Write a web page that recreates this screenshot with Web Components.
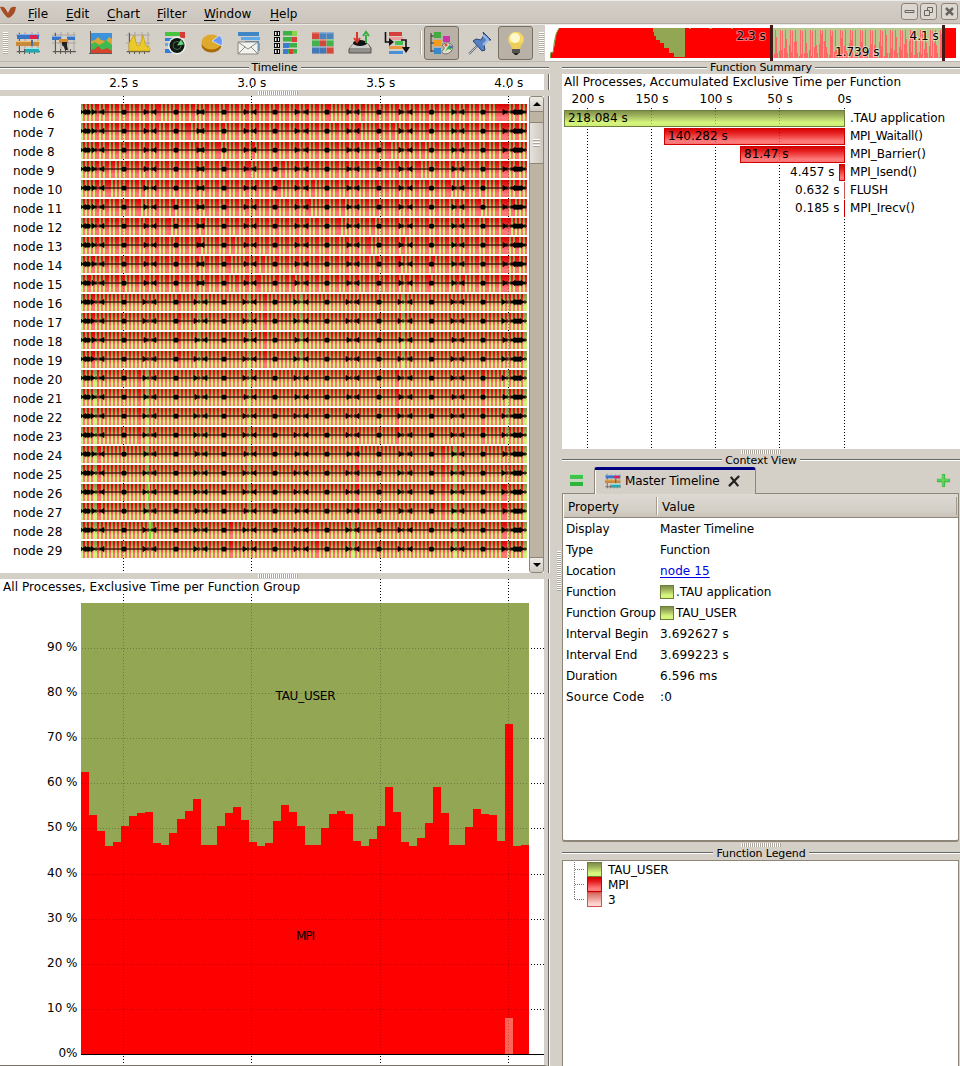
<!DOCTYPE html>
<html lang="en"><head><meta charset="utf-8"><title>Trace viewer</title>
<style>
html,body{margin:0;height:1066px;overflow:hidden;background:#d4cfc7;color:#000;font:12px "DejaVu Sans",sans-serif}
</style></head><body>
<trace-app></trace-app>
<script>
const make=(name,html,init)=>customElements.define(name,class extends HTMLElement{
  connectedCallback(){
    if(this.shadowRoot)return;
    const root=this.attachShadow({mode:'open'});
    root.innerHTML=typeof html==='function'?html(this):html;
    if(init)init(this,root);
  }
});
const rect=(x,y,w,h,f,extra='')=>`<rect x="${x}" y="${y}" width="${w}" height="${h}" fill="${f}" ${extra}/>`;
const text=(x,y,t,extra='')=>`<text x="${x}" y="${y}" ${extra}>${t}</text>`;
const grads=`<defs>
<linearGradient id="g" x1="0" y1="0" x2="0" y2="1"><stop offset="0" stop-color="#7d8f48"/><stop offset=".25" stop-color="#98aa58"/><stop offset=".75" stop-color="#d5f57c"/><stop offset="1" stop-color="#cdec78"/></linearGradient>
<linearGradient id="r" x1="0" y1="0" x2="0" y2="1"><stop offset="0" stop-color="#d40000"/><stop offset=".3" stop-color="#e62222"/><stop offset=".8" stop-color="#ff7c7c"/><stop offset="1" stop-color="#f87070"/></linearGradient>
<linearGradient id="p" x1="0" y1="0" x2="0" y2="1"><stop offset="0" stop-color="#d86a62"/><stop offset=".8" stop-color="#ffd4d0"/><stop offset="1" stop-color="#f4c4c0"/></linearGradient></defs>`;

const axes=`<path d="M3 1V22M9 1V22M16 1V22M22 1V22M0 4H24M0 12H24M0 21H24" stroke="#aaa59e" stroke-width="1"/><path d="M3.500 2V23M1 20.500H24M8.500 18V23M13.500 18V23M18.500 18V23" stroke="#5c5a56"/>`;
const icons={
 timeline:axes+rect(1,3,22,5,'#3b74c4')+rect(14,3,8,5,'#d9234e')+rect(1,3,22,1,'#7fb1ef')+rect(0,10,23,5,'#c98a3a')+rect(0,10,23,1,'#f3c274')+rect(15,9,2,6,'#4770a0')+rect(9,17,14,4.500,'#25a9b1')+rect(9,17,14,1,'#91ecef'),
 process:axes+rect(0,5,9,4,'#3b74c4')+rect(15,5,8,4,'#3b74c4')+rect(0,5,9,1,'#7fb1ef')+rect(15,5,8,1,'#7fb1ef')+rect(7,8,9,4,'#d98e2e')+`<path d="M10 11h5v4l1 4h-3l-1-3-2-2z" fill="#222"/>`,
 area:rect(2,2,21,20,'#3c93dc')+`<path d="M2 10l4-1 3-3 3 3 5 1 3-4 3 2V20H2z" fill="#dda737"/><path d="M2 13l4-2 4 3 4-2 3-3 6 5v8H2z" fill="#3ebb50"/><path d="M2 19l4-1 3-3 4 4 5-2 5 3v2H2z" fill="#d7432b"/><path d="M1.500 0V23M0 22.500H23" stroke="#5c5a56"/>`,
 line:axes+`<path d="M3 20V12l2-3 3-5 3 11 3-1 3-10 2 8 2 4 1-1 2 3v2z" fill="#ecc92a" stroke="#c69b08" stroke-width=".7"/>`,
 radar:rect(2,1,20,4,'#46c33f')+rect(17,1,5,6,'#db3838')+rect(2,7,12,3,'#347cd5')+rect(2,12,8,3,'#64a9e8')+rect(2,18,8,4,'#347cd5')+`<circle cx="14" cy="14.500" r="9" fill="#edf1ef"/><circle cx="14" cy="14.500" r="7.500" fill="#101812"/><circle cx="14" cy="14.500" r="4" fill="none" stroke="#416d4e"/><path d="M14 14.500l4-6 3 5z" fill="#69d17a"/>`,
 pie:`<ellipse cx="11.500" cy="14" rx="10" ry="7.500" fill="#a86b08"/><ellipse cx="11.500" cy="11" rx="10" ry="7.500" fill="#dfa92c"/><path d="M12 10L20 4q4 5 2 11z" fill="#6c99f3" stroke="#e9efff" stroke-width=".8"/>`,
 mail:rect(1,1,21,4,'#3f86c9')+rect(4,6,19,3,'#5ca8e8')+rect(8,10,14,3,'#3f86c9')+rect(20,12,3,8,'#5ca8e8')+`<path d="M1 11H21V23H1z" fill="#f3f3ee" stroke="#8a8985"/><path d="M1 11l10 7 10-7M1 23l7-7M21 23l-7-7" fill="none" stroke="#8a8985"/>`,
 counter:[1,7,13,19].map(y=>rect(0,y-1,6,5,'#080808')+rect(1,y,1.500,3,'#eee')+rect(4,y,1,3,'#eee')+rect(9,y-1,14,4.500,'#3bb244')).join('')+rect(18,0,5,5,'#8ad44b')+rect(18,6,5,5,'#d84138')+rect(9,12,6,5,'#3c7dd0')+rect(15,18,4,5,'#d84138')+rect(9,18,5,5,'#3c7dd0'),
 matrix:[['#d5463b','#4a83bd','#4a83bd'],['#43b24d','#d5463b','#43b24d'],['#4278b6','#4278b6','#d5463b']].map((a,j)=>a.map((c,i)=>rect(1+i*7.300,1+j*7.300,7,7,c)+rect(1+i*7.300,1+j*7.300,7,1.500,'#fff','opacity=".35"')).join('')).join(''),
 disk:`<path d="M5 13H20L23 17V22H1V18z" fill="#92918e" stroke="#55534f"/><path d="M5 13H20L22 17H2z" fill="#ccc"/><ellipse cx="12" cy="12" rx="7" ry="3" fill="#111"/><path d="M9 1V9M6 7l3 4 3-4" stroke="#d9372b" stroke-width="2" fill="none"/><path d="M18 12V4M15 5l3-4 3 4" stroke="#36ae42" stroke-width="2" fill="none"/>`,
 flow:rect(5,1,13,4,'#d63d3d')+rect(5,6,14,3,'#eb9c9c')+rect(11,10,8,4,'#42c24d')+rect(5,15,14,3,'#e79a42')+rect(5,20,14,3,'#4691d8')+`<path d="M1.500 1V11H6M17 9H22V17" fill="none" stroke="#111" stroke-width="1.600"/><path d="M5 7l5 4-5 4zM18 16h8l-4 6z" fill="#111"/>`,
 tree:`<path d="M1 2V21M1 5H5M1 12H5M1 20H5" stroke="#333"/>`+rect(4,1,7,6,'#42ad3e')+rect(4,9,7,6,'#f49c1c')+rect(4,17,7,6,'#368ac9')+rect(13,5,7,6,'#cb35a8')+`<path d="M12 14q6-5 11 1-1 8-8 8-5-1-2-4 3-2-1-5z" fill="#e4dfcf" stroke="#77736b"/><path d="M15 21l2-4 3-4 1 6-3-1z" fill="#2bb835"/><circle cx="16" cy="14" r="1.500" fill="#d74e3a"/><circle cx="21" cy="16" r="1.500" fill="#4567cd"/>`,
 pin:`<path d="M1 23L10 14" stroke="#59677c" stroke-width="2"/><path d="M1 23L10 14" stroke="#ddd" stroke-width=".8"/><path d="M15 1l8 8-3 0-4 5 1 5-3 1L5 10l3-2 5 1 3-5z" fill="#5681c5" stroke="#27466f"/><path d="M15 4l5 5-5 5" fill="none" stroke="#9bbcec" stroke-width="2"/>`,
 bulb:`<circle cx="12" cy="8.500" r="7.800" fill="#f4d968"/><path d="M6 12H18L16 18H8z" fill="#edce5b"/><ellipse cx="11" cy="7" rx="5" ry="5" fill="#fff8cb"/>${rect(8,18,8,4,'#54534d')}<path d="M9 22H15L13 24H11z" fill="#222"/>`,
 list:rect(1,2,13,5,'#42c34b')+rect(1,9,13,5,'#30b43b')+rect(1,2,13,1,'#a3e8a8')+rect(1,9,13,1,'#a3e8a8'),
 plus:`<path d="M8 1V15M1 8H15" stroke="#41bd41" stroke-width="3.500"/><path d="M7.500 2V14M2 7.500H14" stroke="#7de078" stroke-width="1"/>`,
 close:`<path d="M3 2l8 10M1 12L12 1" stroke="#222" stroke-width="2.400"/>`,
 logo:`<path d="M0 3q5-1 8 5 2-6 8-5-1 9-8 11-5-4-8-11z" fill="#a84c25"/><path d="M5 4l3 5 3-6z" fill="#d0cbc4"/>`
};
make('app-icon',h=>{const s=+h.getAttribute('size')||24,b=+h.getAttribute('box')||24;return `<style>:host{display:block;width:${s}px;height:${s}px;flex:none}svg{display:block;overflow:visible}</style><svg width="${s}" height="${s}" viewBox="0 0 ${b} ${b}" fill="none">${icons[h.getAttribute('name')]}</svg>`});

make('menu-bar',`<style>:host{display:flex;height:24px;box-sizing:border-box;align-items:center;background:linear-gradient(#eee 0 1px,#d4cfc8 1px,#cbc5bd 23px,#b4aea5 23px);padding:2px 2px 0 0}
app-icon{margin:-2px 12px 0 0}.sp{flex:1}
.item{line-height:20px;padding-top:2px}.u{text-decoration:underline;text-underline-offset:2px}
.w{width:17px;height:17px;box-sizing:border-box;border:1px solid #8b8377;border-radius:3px;background:#dcd7d0;margin-left:3px;margin-top:-3px}.w:first-of-type{margin-left:2px}.w svg{display:block}</style>
<app-icon name="logo" size="16" box="16"></app-icon>${[['File',38],['Edit',41],['Chart',50],['Filter',47],['Window',66],['Help',40]].map(([t,w])=>`<div class="item" style="width:${w}px"><span class="u">${t[0]}</span>${t.slice(1)}</div>`).join('')}
<i class="sp"></i>${['M3 6.500H12V8.500H3z','M3.500 6.500H8.500V11.500H3.500zM6.500 6V3.500H11.500V8.500H9','M4 4L11 11M11 4L4 11'].map((d,i)=>`<div class="w"${i==1?' style="margin-left:2px"':i==2?' style="margin-left:4px"':''}><svg width="15" height="15"><path d="${d}" fill="none" stroke="#69655e" stroke-width="${i==2?2.500:1}"/></svg></div>`).join('')}`);

make('trace-overview',`<style>:host{display:block;width:415px;height:36px;background:#fff}svg{display:block}text{font:12px "DejaVu Sans",sans-serif;paint-order:stroke;stroke:#fff;stroke-opacity:.45;stroke-width:2px}</style><svg width="415" height="36"></svg>`,(h,r)=>{
 let s=`<path d="M5 33L6 27H8L10 17L11 9L14 3H411V33z" fill="#f00"/><path d="M5.500 33V28H8L9.500 16L11.500 8L14 3.500" stroke="#779b37" fill="none"/><path d="M108 3H140V32H129V28H124V23H119V18H115V15H111V11H109V7H108z" fill="#93a654"/>`;
 s+=rect(144,3,2,1,'#93a654')+rect(164,3,3,1,'#93a654')+rect(186,3,2,1,'#93a654');
 s+=rect(227,3,171,30,'#ff6666');let d='';
 for(let i=0;i<170;i++){const m=i%5;const y=m===0?33:m===1?16+(i*13)%17:m===2?5:m===3?9+(i*17)%24:(i%2?6:28);d+=`M${228+i} 3h1V${y}h-1z`}
 s+=`<path d="${d}" fill="#b9c78e" shape-rendering="crispEdges"/>`+rect(225,0,3,36,'#421818')+rect(397,0,3,36,'#421818');
 s+=text(191.5,15,'2.3 s')+text(364.5,15,'4.1 s')+text(290,31,'1.739 s');r.querySelector('svg').innerHTML=s});

make('tool-bar',`<style>:host{display:flex;height:38px;box-sizing:border-box;border-top:1px solid #eeebe6;border-bottom:1px solid #bbb5ac;background:linear-gradient(#d2cdc5,#d5d0c8)}
.tools{width:545px;display:grid;grid-template-columns:9px 37px repeat(10,36.900px) 12px 30px 46px 26px 16px;align-items:center;justify-items:center}
.grip{width:5px;height:22px;background:repeating-linear-gradient(#fff 0 1px,#b2aca3 1px 2px)}.grip:last-child{justify-self:end;margin-right:1px}.grip:first-child{justify-self:end;margin-right:1px}.sep{width:2px;height:24px;background:linear-gradient(90deg,#b2aca3 50%,#fff 50%)}.on{width:33px;height:32px;border:1px solid #777064;border-radius:3px;background:#b9b1a5;display:grid;place-items:center}</style>
<div class="tools"><i class="grip"></i>${'timeline process area line radar pie mail counter matrix disk flow'.split(' ').map(n=>`<app-icon name="${n}"></app-icon>`).join('')}<i class="sep"></i><div class="on"><app-icon name="tree"></app-icon></div><app-icon name="pin"></app-icon><div class="on"><app-icon name="bulb"></app-icon></div><i class="grip"></i></div><trace-overview></trace-overview>`);

make('dock-title',`<style>:host{display:flex;height:12px;align-items:center;font-size:11px;letter-spacing:-.1px;line-height:12px;gap:3px;white-space:nowrap}i{height:1px;flex:1;background:#666;border-bottom:1px solid #fff;margin-top:-1px}</style><i></i><span><slot></slot></span><i></i>`);
make('split-grip',`<style>:host{display:flex;height:6px;justify-content:center;align-items:center;background:#d4cfc7}i{width:40px;height:4px;background:repeating-linear-gradient(90deg,#fff 0 1px,#aaa59c 1px 2px)}</style><i></i>`);
const xs=[123.5,251.5,380.5,508.500];
make('time-axis',`<style>:host{display:block;height:16px;background:#fff}svg{display:block}text{font:12px "DejaVu Sans",sans-serif}</style><svg width="544" height="16">${['2.5 s','3.0 s','3.5 s','4.0 s'].map((t,i)=>text(xs[i]+.3,12.500,t,'text-anchor="middle"')+`<path d="M${xs[i]} 13v3" stroke="#000" stroke-dasharray="1 2"/>`).join('')}</svg>`);

make('trace-row',`<style>:host{display:flex;height:17px}.l{width:68px;padding-left:13px;line-height:20px;letter-spacing:.05px}svg{display:block}</style><div class="l"></div><svg width="446" height="17"></svg>`,(h,r)=>{
 const n=+h.getAttribute('node');r.querySelector('.l').textContent='node '+n;
 let d='',g=false;
 for(let i=0;i<223;i++){
  const x=81+i*2,ph=((x-97)%51.300+51.300)%51.300;
  if(n<16){
   // compute-light ranks: every few cells a red interval runs two cells long
   g=(!g&&((i%5===3)||(i*11+n*5)%17===0))?false:!g;
   if(x>500&&x<507)g=false;
  }else{
   g=!g;
   if(ph>49&&ph<51)g=true;
   if((i*11+(n>>2)*5)%43===0)g=false;
   if(n>25&&x>501&&x<507)g=false;
   if(x>=523)g=true;
  }
  if(g)d+=`M${i*2} 0h2v17h-2z`;
 }
 let s=grads+rect(0,0,446,17,'url(#r)')+`<path d="${d}" fill="url(#g)" shape-rendering="crispEdges"/>`;
 if(n===28)s+=rect(68,0,2,17,'#8fd23c');
 if(n===26)s+=rect(67,0,2,17,'#8fd23c');
 s+=`<path d="M2 8H446" stroke="#2b0c04" stroke-opacity=".65" stroke-width="2"/>`;
 const L=[83.500,102,154,n<16?202:205,254,306,357,410,462,513],R=[94,146,n<16?199:197,246,297,349,401,454,505,523],D=[88,124,176,224,275,327,379,431.500,483,516,519];
 const j=n>=16&&n%3?1:0;
 s+=`<path d="${L.map(x=>`M${x-83} 6v4M${x-83} 8l4-2.500v5z`).join('')}${R.map(x=>`M${x-79} 6v4M${x-79-j} 8l-4-2.500v5z`).join('')}" fill="#000" stroke="#000" stroke-width="1" stroke-opacity=".8"/>`;
 s+=D.map(x=>`<rect x="${x-83.500}" y="5.700" width="5" height="4.800" rx="1.500"/>`).join('');
 r.querySelector('svg').innerHTML=s});

const vlines=(h,o)=>`<svg class="v" width="529" height="${h}" style="opacity:${o}">${xs.map(x=>`<path d="M${x} 0V${h}" stroke="#000" stroke-dasharray="1 2"/>`).join('')}</svg>`;
make('scroll-bar',`<style>:host{display:flex;flex-direction:column;width:15px;box-sizing:border-box;background:#bdb4a4;border:1px solid #8d8577;border-radius:3px;overflow:hidden}
.b{height:14px;background:linear-gradient(#eeebe6,#cfc9c0);display:grid;place-items:center}.b.t{border-bottom:1px solid #8d8577}.b.d{border-top:1px solid #8d8577}.gap{height:10px}.th{height:40px;border:solid #8d8577;border-width:1px 0;background:linear-gradient(90deg,#e6e1db,#cdc7be);display:grid;place-items:center}.th i{width:7px;height:8px;background:repeating-linear-gradient(#fff 0 1px,#aaa39a 1px 2px,#ddd 2px 3px)}.sp{flex:1}svg{display:block}</style>
<div class="b t"><svg width="8" height="4"><path d="M0 4L4 0L8 4z"/></svg></div><div class="gap"></div><div class="th"><i></i></div><div class="sp"></div><div class="b d"><svg width="8" height="4"><path d="M0 0L4 4L8 0z"/></svg></div>`);
make('trace-timeline',`<style>:host{display:flex;height:477px;background:#fff}.box{width:529px;position:relative}.v{position:absolute;top:0;left:0}.rows{position:relative;padding-top:8px;display:flex;flex-direction:column;gap:2px}</style>
<div class="box">${vlines(477,1)}<div class="rows">${Array.from({length:24},(_,i)=>`<trace-row node="${i+6}"></trace-row>`).join('')}</div>${vlines(462,.3)}</div><scroll-bar></scroll-bar>`);

const tops=[772,815,831,846,842,826,816,813,812,843,845,833,819,811,799,845,845,826,813,807,820,842,846,843,821,805,812,826,845,845,828,814,811,814,841,846,839,826,787,812,842,846,838,823,787,813,845,845,827,809,814,815,841,724,846,845];
make('group-chart',`<style>:host{display:block;height:486px;background:#fff;border-bottom:1px solid #777064}svg{display:block}text{font:12px "DejaVu Sans",sans-serif}</style><svg width="544" height="486" viewBox="0 579 544 486"></svg>`,(h,r)=>{
 const gy=[648,693,738,783,828,874,919,964,1009];
 let s=xs.map((x,i)=>`<path d="M${x} ${i<2?594:579}V603M${x} 1056V1065" stroke="#000" stroke-dasharray="1 2"/>`).join('');
 s+=text(3,591,'All Processes, Exclusive Time per Function Group','textLength="297"');
 s+=rect(81,603,448,451,'#93a654')+`<path d="${tops.map((y,i)=>`M${81+i*8} 1054V${y}h8V1054z`).join('')}" fill="#f00" shape-rendering="crispEdges"/>`+rect(505,1018,8,36,'#ff6458');
 s+=gy.map((y,i)=>`<path d="M82 ${y+.5}H529" stroke="#000" stroke-opacity=".25" stroke-dasharray="1 2"/><path d="M531 ${y+.5}H544" stroke="#000" stroke-dasharray="1 2"/>`+text(77.5,y+3,`${90-i*10} %`,'text-anchor="end"')).join('');
 s+=xs.map(x=>`<path d="M${x} 603V1054" stroke="#000" stroke-opacity=".25" stroke-dasharray="1 2"/>`).join('');
 s+=rect(81,1054,463,1,'#000')+text(77.5,1057,'0%','text-anchor="end"')+text(305.5,700,'TAU_USER','text-anchor="middle" textLength="60"')+text(305.5,940,'MPI','text-anchor="middle" textLength="19"');
 r.querySelector('svg').innerHTML=s});

make('summary-chart',`<style>:host{display:block;height:375px;background:#fff}svg{display:block}text{font:12px "DejaVu Sans",sans-serif}</style><svg width="398" height="375" viewBox="562 74 398 375"></svg>`,(h,r)=>{
 const gx=[587,651,715,779,844];
 let s=grads+text(564,86,'All Processes, Accumulated Exclusive Time per Function','textLength="337"');
 s+=gx.map((x,i)=>text(i==4?844.500:x+1,103,['200 s','150 s','100 s','50 s','0s'][i],'text-anchor="middle"')+`<path d="M${x+.5} 108V449" stroke="#000" stroke-dasharray="1 2"/>`).join('');
 [[564,'218.084 s','.TAU application','g','#6d7d3b'],[664,'140.282 s','MPI_Waitall()','r','#cf0000'],[740,'81.47 s','MPI_Barrier()','r','#cf0000'],[839,'4.457 s','MPI_Isend()','r','#cf0000'],[844,'0.632 s','FLUSH','p','#cf5550'],[844,'0.185 s','MPI_Irecv()','r','#cf0000']].forEach(([x,v,n,g,b],i)=>{
  const y=110+i*18;
  s+=x<844?rect(x+.5,y+.5,844-x,16,`url(#${g})`,`stroke="${b}"`):rect(844,y,1,17,b);
  if(i<3)s+=gx.slice(0,4).filter(q=>q>x).map(q=>`<path d="M${q+.5} ${y+1}v15" stroke="#000" stroke-opacity=".3" stroke-dasharray="1 2"/>`).join('');
  s+=i<3?text(x+4,y+12,v):text(i==3?834.500:839.500,y+12,v,'text-anchor="end"');s+=text(850,y+12,n,`textLength="${[95,73,76,67,38,65][i]}"`)});
 r.querySelector('svg').innerHTML=s});

make('color-chip',h=>{const c={g:['#7d8f48,#98aa58 25%,#d5f57c 75%','#6d7d3b'],r:['#d40000,#e62222 30%,#ff7c7c 80%','#cf0000'],p:['#d86a62,#ffd4d0 85%','#cf5550']}[h.getAttribute('tone')];return `<style>:host{display:block;box-sizing:border-box;width:14px;height:14px;flex:none;border:1px solid ${c[1]};background:linear-gradient(${c[0]})}</style>`});
make('prop-row',`<style>:host{display:flex;height:21px;align-items:center;line-height:21px;white-space:nowrap;letter-spacing:-.12px}:host([wide]){letter-spacing:.25px}.k{width:94px}.v{display:flex;align-items:center;gap:2px}:host([plain]) .v{letter-spacing:.15px}::slotted(a){color:#0000e8;text-decoration:underline;text-underline-offset:2px;letter-spacing:.1px}::slotted(color-chip){margin-top:-2px}</style><div class="k"></div><div class="v"><slot></slot></div>`,(h,r)=>r.querySelector('.k').textContent=h.getAttribute('key'));
make('context-view',`<style>:host{display:flex;flex-direction:column;height:375px}
.tabs{height:26px;display:flex;align-items:center;flex:none;position:relative;z-index:1}.list{width:32px;box-sizing:border-box;padding-left:7px}.tab{width:162px;height:27px;box-sizing:border-box;border:1px solid #8d8577;border-top:3px solid #000080;border-bottom:0;border-radius:3px 3px 0 0;background:#d4cfc7;display:flex;align-items:center;padding:0 0 1px 10px;box-shadow:inset 1px 0 #fff}.tab span{margin:0 8px 0 4px;letter-spacing:-.08px}.sp{flex:1}.plus{margin-right:9px}
.body{flex:1;border:1px solid #8d8577;border-width:1px 1px 2px;border-radius:0 0 3px 3px;background:#fff;box-shadow:inset 1px 1px #fff;margin-right:1px}
.head{height:24px;display:flex;background:linear-gradient(#ddd8d1,#d4cfc7 70%,#c9c3b9);border-bottom:1px solid #8d8577;margin-left:1px;padding-left:4px;box-sizing:border-box}.head div:first-child{width:88px;border-right:1px solid #a39d93;box-shadow:1px 0 #fff;height:18px;margin-top:3px;line-height:20px}.head div:nth-child(2){padding-left:5px;flex:1;margin:3px 1px 2px 0;line-height:20px;border-right:1px solid #a39d93}
.rows{padding:1px 0 0 3px}</style>
<div class="tabs"><div class="list"><app-icon name="list" size="16" box="16"></app-icon></div><div class="tab"><app-icon name="timeline" size="16"></app-icon><span>Master Timeline</span><app-icon name="close" size="13" box="14"></app-icon></div><div class="sp"></div><app-icon class="plus" name="plus" size="15" box="16"></app-icon></div>
<div class="body"><div class="head"><div>Property</div><div>Value</div></div><div class="rows">
<prop-row key="Display">Master Timeline</prop-row><prop-row key="Type">Function</prop-row><prop-row key="Location"><a>node 15</a></prop-row><prop-row key="Function"><color-chip tone="g"></color-chip>.TAU application</prop-row><prop-row key="Function Group"><color-chip tone="g"></color-chip>TAU_USER</prop-row><prop-row plain key="Interval Begin">3.692627 s</prop-row><prop-row plain key="Interval End">3.699223 s</prop-row><prop-row plain key="Duration">6.596 ms</prop-row><prop-row wide key="Source Code">:0</prop-row></div></div>`);
make('function-legend',`<style>:host{display:block;height:206px;box-sizing:border-box;border:1px solid #8d8577;border-width:1px 1px 0;background:#fff;padding:1px 0 0 11px;margin-right:1px}.r{display:flex;height:15px;align-items:center;line-height:15px}.t{width:13px;height:15px}.r span{margin:2px 0 0 6px;letter-spacing:-.15px}color-chip{width:15px;height:15px}svg{display:block}</style>
${[['g','TAU_USER'],['r','MPI'],['p','3']].map(([t,n],i)=>`<div class="r"><svg class="t" width="13" height="15"><path d="M.5 0V${i==2?8:15}M1 7.500H10" stroke="#777" stroke-dasharray="1 1"/></svg><color-chip tone="${t}"></color-chip><span>${n}</span></div>`).join('')}`);

make('trace-app',`<style>:host{display:block;width:960px;height:1066px;overflow:hidden}main{display:flex;height:1004px}.l{width:549px}.r{width:398px;display:flex;flex-direction:column}.gut{width:13px;flex:none;display:grid;align-items:center}.gut i{width:4px;height:40px;margin-left:8px;margin-top:13px;background:repeating-linear-gradient(#fff 0 1px,#aaa59c 1px 2px)}.pane{width:544px;border-right:4px solid #d4cfc7;box-shadow:1px 0 #666,2px 0 #fff}.g1{width:555px}.g2{height:5px}.r dock-title{flex:none}.tall{height:13px}</style>
<menu-bar></menu-bar><tool-bar></tool-bar><main><section class="l"><dock-title>Timeline</dock-title><time-axis class="pane"></time-axis><split-grip class="g1"></split-grip><trace-timeline class="pane"></trace-timeline><split-grip class="g1"></split-grip><group-chart class="pane"></group-chart></section><div class="gut"><i></i></div>
<section class="r"><dock-title>Function Summary</dock-title><summary-chart></summary-chart><split-grip class="g2"></split-grip><dock-title class="tall">Context View</dock-title><context-view></context-view><split-grip class="g2"></split-grip><dock-title class="tall">Function Legend</dock-title><function-legend></function-legend></section></main>`);
</script></body></html>
